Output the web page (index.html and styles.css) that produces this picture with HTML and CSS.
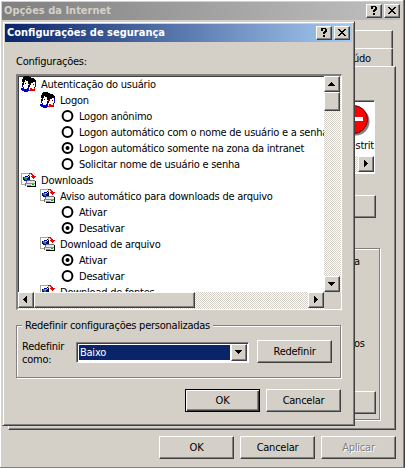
FILE: index.html
```html
<!DOCTYPE html>
<html lang="pt-BR">
<head>
<meta charset="utf-8">
<title>Opções da Internet</title>
<link rel="stylesheet" href="styles.css">
</head>
<body>
<svg class="defs" width="0" height="0">
  <symbol id="users" viewBox="0 0 16 16">
    <path fill="#fff" d="M2 5h5v6H2zM9 6h5v7H9z"/>
    <path fill="#000" d="M3 0h5v1h2v1h3v1h1v1h1v4h-1V6h-2v1h-2v2H9v2H8V8H7V5H5V4H4v2H3v3H2v1H1V7h1V6H1V3h1V1h1zM4 7h1v1H4zM12 8h1v1h-1zM7 9h1v4H7zM13 11h1v1h-1z"/>
    <path fill="#0000c8" d="M0 12h2v-1h1v2h3v-1h2v3H7v1H3v-1H1v-1H0zM14 6h1v5h-1zM1 9h1v2H1z"/>
    <path fill="#e00000" d="M9 12h2v1h2v-1h1v3H8v-1h1zM8 8h1v1H8z"/>
  </symbol>
  <symbol id="download" viewBox="0 0 17 16">
    <path fill="#fff" stroke="#a8a484" d="M.5 1.5h8v11h-8z"/>
    <path fill="#0000a8" d="M4 4h3v1h1v4H3V8H2V5h2z"/>
    <path fill="#00a850" d="M3 5h2v1h1v2H4V7H3z"/>
    <path fill="#58dce8" d="M5 5h2v1H5z"/>
    <path fill="#000" d="M7 3h2v1h1v5H9V5H8V4H7zM6 14h10v1H6zM15 9h1v5h-1z"/>
    <path fill="#707070" d="M6 8h9v1H6zM5 9h1v2H5zM4 11h1v3H4z"/>
    <path fill="#e4e4e4" d="M6 9h9v2H6zM5 11h10v3H5z"/>
    <path fill="#909090" d="M5 11h10v1H5zM6 13h5v1H6z"/>
    <path fill="#00b000" d="M12 12h2v1h-2z"/>
    <path fill="#f00000" d="M9 1h3v1h1v1h1v1h2v1h-1v1h-1v1h-1V6h-1V5h-1V4h1V3h-1V2H9z"/>
  </symbol>
  <symbol id="off" viewBox="0 0 13 13"><circle cx="6.5" cy="7" r="4.9" fill="#fff" stroke="#000" stroke-width="2"/></symbol>
  <symbol id="on" viewBox="0 0 13 13"><circle cx="6.5" cy="7" r="4.9" fill="#fff" stroke="#000" stroke-width="2"/><circle cx="6.5" cy="7" r="2" /></symbol>
  <symbol id="help" viewBox="0 0 16 14"><path d="M5 2h5v1h1v3h-1v1H9v1H7V6h1V5h1V3H7v2H5V3h0zM7 9h2v2H7z"/></symbol>
  <symbol id="close" viewBox="0 0 16 14"><path d="M4 3h2v1h1v1h2V4h1V3h2v1h-1v1h-1v1H9v1h1v1h1v1h1v1h-2V9H9V8H7v1H6v1H4V9h1V8h1V7h1V6H6V5H5V4H4z"/></symbol>
  <symbol id="up" viewBox="0 0 16 16"><path d="M7 6h1v1h1v1h1v1h1v1H4V9h1V8h1V7h1z"/></symbol>
  <symbol id="down" viewBox="0 0 16 16"><path d="M4 6h7v1h-1v1H9v1H8v1H7V9H6V8H5V7H4z"/></symbol>
  <symbol id="left" viewBox="0 0 16 16"><path d="M9 4v7H8v-1H7V9H6V8H5V7h1V6h1V5h1V4z"/></symbol>
  <symbol id="right" viewBox="0 0 16 16"><path d="M6 4v7h1v-1h1V9h1V8h1V7H9V6H8V5H7V4z"/></symbol>
</svg>

<main class="window parent">
  <header class="titlebar inactive"><h1>Opções da Internet</h1>
    <span class="cap"><svg><use href="#help"/></svg></span><span class="cap last"><svg><use href="#close"/></svg></span>
  </header>
  <div class="tab back"></div>
  <div class="tab front"><span>údo</span></div>
  <section class="page">
    <div class="zones">
      <svg class="stop" viewBox="0 0 32 32"><circle cx="17.5" cy="17.5" r="14" fill="#808080"/><circle cx="15.5" cy="15.5" r="14" fill="#f00" stroke="#600000"/><path fill="#fff" d="M5 13h20v4H5z"/></svg>
      <span class="zname">estrit</span>
      <div class="zscroll track"><span class="sb"><svg><use href="#right"/></svg></span></div>
    </div>
    <div class="btn sites"></div>
    <div class="level"><span>a</span><span class="os">os</span><div class="btn standard"></div></div>
  </section>
  <footer class="actions outer">
    <button class="btn">OK</button><button class="btn">Cancelar</button><button class="btn disabled">Aplicar</button>
  </footer>
</main>

<section class="window dialog">
  <header class="titlebar active"><h1>Configurações de segurança</h1>
    <span class="cap"><svg><use href="#help"/></svg></span><span class="cap last"><svg><use href="#close"/></svg></span>
  </header>
  <div class="content">
    <div class="label">Configurações:</div>
    <div class="list">
      <ul class="tree">
        <li><svg><use href="#users"/></svg><span>Autenticação do usuário</span></li>
        <li class="l1"><svg><use href="#users"/></svg><span>Logon</span></li>
        <li class="l2"><svg><use href="#off"/></svg><span>Logon anônimo</span></li>
        <li class="l2"><svg><use href="#off"/></svg><span>Logon automático com o nome de usuário e a senha</span></li>
        <li class="l2"><svg><use href="#on"/></svg><span>Logon automático somente na zona da intranet</span></li>
        <li class="l2"><svg><use href="#off"/></svg><span>Solicitar nome de usuário e senha</span></li>
        <li><svg><use href="#download"/></svg><span>Downloads</span></li>
        <li class="l1"><svg><use href="#download"/></svg><span>Aviso automático para downloads de arquivo</span></li>
        <li class="l2"><svg><use href="#off"/></svg><span>Ativar</span></li>
        <li class="l2"><svg><use href="#on"/></svg><span>Desativar</span></li>
        <li class="l1"><svg><use href="#download"/></svg><span>Download de arquivo</span></li>
        <li class="l2"><svg><use href="#on"/></svg><span>Ativar</span></li>
        <li class="l2"><svg><use href="#off"/></svg><span>Desativar</span></li>
        <li class="l1"><svg><use href="#download"/></svg><span>Download de fontes</span></li>
      </ul>
      <div class="vscroll track"><span class="sb"><svg><use href="#up"/></svg></span><span class="thumb"></span><span class="sb end"><svg><use href="#down"/></svg></span></div>
      <div class="hscroll track"><span class="sb"><svg><use href="#left"/></svg></span><span class="thumb"></span><span class="sb end"><svg><use href="#right"/></svg></span></div>
      <div class="corner"></div>
    </div>
    <fieldset class="reset">
      <legend>Redefinir configurações personalizadas</legend>
      <div class="fields">
        <label>Redefinir<br>como:</label>
        <div class="combo"><span class="value">Baixo</span><span class="sb"><svg><use href="#down"/></svg></span></div>
        <button class="btn">Redefinir</button>
      </div>
    </fieldset>
    <footer class="actions inner"><button class="btn default">OK</button><button class="btn">Cancelar</button></footer>
  </div>
</section>
</body>
</html>
```
FILE: styles.css
```css
* { box-sizing: border-box; }
body { margin: 0; width: 405px; height: 468px; overflow: hidden; background: #d4d0c8; color: #000;
  font: 11px/13px "DejaVu Sans Condensed", "DejaVu Sans", sans-serif; font-stretch: condensed; letter-spacing: -0.24px; }
svg { display: block; flex: none; width: 16px; height: 16px; shape-rendering: crispEdges; }
svg.defs { position: absolute; width: 0; height: 0; }
h1, ul, fieldset, legend { margin: 0; padding: 0; }
.window { background: #d4d0c8; display: flex; flex-direction: column; }
.parent { width: 405px; height: 468px; padding: 2px 4px 0 2px; border-right: 1px solid #404040; border-bottom: 1px solid #808080; box-shadow: inset -1px 0 #808080, inset 1px 1px #fff; }
.dialog { position: absolute; left: 2px; top: 21px; width: 353px; height: 405px; padding: 2px;
  border: 1px solid; border-color: #d4d0c8 #404040 #404040 #d4d0c8; box-shadow: inset 1px 1px #fff, inset -1px -1px #808080; }
.titlebar { display: flex; align-items: center; flex: none; height: 18px; padding: 0 2px; color: #fff; }
.titlebar h1 { flex: 1; font-size: 11px; font-weight: bold; line-height: 18px; white-space: nowrap; letter-spacing: 0; }
.inactive { background: linear-gradient(90deg, #808080, #c0c0c0); color: #d4d0c8; padding-right: 0; }
.active { background: linear-gradient(90deg, #0a246a, #a6caf0); }
.cap, .sb, .thumb, .btn { background: #d4d0c8; border: 1px solid; border-color: #fff #404040 #404040 #fff; box-shadow: inset -1px -1px #808080; }
.cap { width: 16px; height: 14px; margin-right: 2px; }
.cap.last { margin-right: 0; }
.cap svg { width: 16px; height: 14px; margin: -1px; }
.sb { display: block; flex: none; width: 16px; height: 16px; }
.sb svg { margin: -1px; }
.thumb { display: block; }
.track { display: flex; background: repeating-conic-gradient(#fff 0 25%, #d4d0c8 0 50%) 0 0 / 2px 2px; }
.end { margin-left: auto; }
.btn { width: 75px; height: 23px; padding: 0; font: inherit; letter-spacing: inherit; color: #000; text-align: center; flex: none; }

.tab { align-self: flex-end; width: 60px; height: 18px; margin-top: 10px; margin-right: 7px; border-top: 1px solid #fff; border-right: 1px solid #404040; box-shadow: inset -1px 0 #808080; }
.tab.front { margin-top: 0; padding: 3px 0 0 20px; }
.page { flex: none; height: 364px; margin: 0 4px 0 6px; padding: 33px 5px 0 0; display: flex; flex-direction: column; align-items: flex-end;
  border: 1px solid; border-color: #fff #404040 #404040 #fff; box-shadow: inset -1px -1px #808080; }
.zones { width: 60px; height: 74px; margin-right: 15px; background: #fff; border: 1px solid; border-color: #808080 #fff #fff #808080; box-shadow: inset 0 1px #404040; display: flex; flex-direction: column; align-items: flex-end; }
.stop { width: 32px; height: 32px; margin: 3px 4px 0 0; shape-rendering: auto; }
.zname { margin-top: 3px; height: 13px; }
.zscroll { width: 58px; height: 16px; margin-top: 4px; justify-content: flex-end; }
.sites { margin: 21px 14px 0 0; }
.level { width: 100px; height: 172px; margin-top: 30px; margin-right: 10px; padding: 6px 0 0 73px; border: 1px solid #808080; box-shadow: inset 0 1px #fff, 1px 1px #fff; display: flex; flex-direction: column; }
.os { margin-top: 69px; }
.standard { margin: 41px 3px 0 -53px; }
.actions { display: flex; justify-content: flex-end; gap: 6px; }
.outer { margin: 6px 4px 0 0; }
.disabled { color: #808080; text-shadow: 1px 1px #fff; }

.content { padding: 13px 11px 0; }
.label { height: 19px; }
.list { width: 326px; height: 236px; border: 2px solid; border-color: #808080 #fff #fff #808080; border-right-width: 1px; border-bottom-width: 1px; box-shadow: inset 1px 1px #404040; display: grid; grid-template: 216px 17px / 306px 17px; background: #fff; }
.tree { list-style: none; overflow: hidden; }
.tree li { display: flex; height: 16px; padding-left: 3px; line-height: 16px; white-space: nowrap; }
.tree span { margin-left: 4px; padding-top: 1px; }
.tree .l1 { padding-left: 22px; }
.tree .l2 { padding-left: 43px; }
.tree .l2 svg { width: 13px; height: 13px; margin-top: 1px; shape-rendering: auto; }
.tree .l2 span { margin-left: 5px; }
.vscroll { flex-direction: column; }
.vscroll .thumb { width: 16px; height: 19px; }
.vscroll .end { margin-top: auto; margin-left: 0; }
.hscroll .thumb { width: 161px; height: 16px; }
.corner { background: #d4d0c8; }
.reset { position: relative; width: 325px; height: 53px; margin-top: 15px; border: 1px solid #808080; box-shadow: inset 1px 1px #fff, 1px 1px #fff; }
.reset legend { position: absolute; left: 5px; top: -7px; padding: 0 3px; height: 14px; background: #d4d0c8; white-space: nowrap; }
.fields { display: flex; align-items: flex-start; padding: 14px 0 0 5px; }
.fields label { width: 54px; }
.combo { display: flex; width: 173px; height: 21px; margin: 2px 8px 0 0; padding: 1px; border: 1px solid; border-color: #808080 #fff #fff #808080; box-shadow: inset 1px 1px #404040; background: #fff; }
.value { flex: 1; margin: 1px; padding-left: 1px; line-height: 15px; background: #0a246a; color: #fff; }
.combo .sb { height: 17px; }
.inner { margin-top: 11px; }
.default { box-shadow: inset 1px 1px #fff, inset -1px -1px #404040, inset -2px -2px #808080; border-color: #000; }
```
